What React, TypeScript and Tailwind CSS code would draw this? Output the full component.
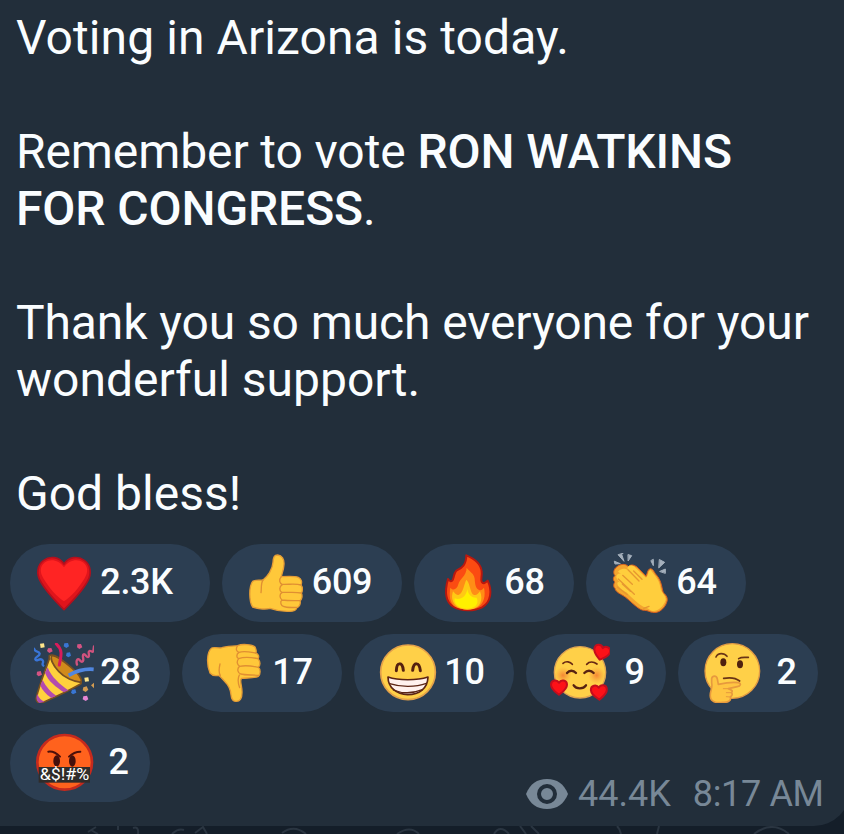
import type { ReactNode } from "react"

interface EmojiProps {
    viewBox: string
    children: ReactNode
}

function Emoji({ viewBox, children }: EmojiProps) {
    return (
        <svg viewBox={viewBox} className="w-[60px] h-[60px] shrink-0" strokeLinecap="round" strokeLinejoin="round">
            {children}
        </svg>
    )
}

const Heart = () => (
    <Emoji viewBox="102 69 180 180">
        <path d="M192 102 C178 80 149 77 131 91 C111 105 109 132 121 153 C138 185 168 215 192 239 C216 215 246 185 263 153 C275 132 273 105 253 91 C235 77 206 80 192 102 Z" fill="#e0141b" stroke="#b3101d" strokeWidth="5" />
        <path d="M192 112 C178 90 151 85 135 97 C118 110 120 128 130 145 C147 174 172 202 192 214 C212 202 237 174 254 145 C264 128 266 110 249 97 C233 85 206 90 192 112 Z" fill="#ff2423" />
    </Emoji>
)

const ThumbsUp = () => (
    <Emoji viewBox="108 69 180 180">
        <path d="M128 154 C137 148 151 152 159 150 C172 140 188 118 189 97 C190 80 193 75 203 75 C216 76 223 88 222 103 C221 119 216 130 214 140 C231 139 254 138 265 142 C276 147 276 158 273 165 C279 172 278 184 274 189 C278 197 276 208 270 212 C273 222 267 231 261 233 C258 244 244 245 231 244 C208 244 191 239 180 235 C164 240 139 235 128 231 C117 215 116 170 128 154 Z" fill="#ffc83a" stroke="#e59c36" strokeWidth="4" />
        <path d="M159 150 C152 160 155 175 153 188 M214 140 C205 150 209 159 217 164 M217 164 C207 170 207 182 216 188 C208 192 208 204 216 210 C208 216 214 227 220 229 C229 233 244 233 260 232 M217 163 C235 164 257 160 273 165 M216 187 C234 188 255 185 274 189 M216 210 C235 213 252 212 270 212" fill="none" stroke="#e08f32" strokeWidth="4" />
    </Emoji>
)

const Fire = () => (
    <Emoji viewBox="99 69 180 180">
        <path d="M184 76 C208 86 229 103 230 126 C232 139 226 148 230 155 C235 164 242 157 248 152 C262 181 259 216 231 232 C208 244 169 244 146 231 C119 215 119 183 129 147 C133 153 139 157 143 150 C149 137 145 133 154 122 C166 115 184 109 184 76 Z" fill="#fb4b12" stroke="#b9180f" strokeWidth="6" />
        <path d="M185 113 C193 125 207 129 209 146 C210 159 211 174 221 179 C228 184 233 177 237 173 C242 196 238 219 219 231 C202 241 169 241 151 230 C134 218 132 198 136 173 C145 184 156 178 160 163 C163 146 184 140 185 113 Z" fill="#ff8d16" />
        <path d="M184 149 C194 158 194 177 202 191 C211 201 220 191 225 184 C236 210 224 232 204 237 C179 243 148 236 142 208 C140 198 142 191 144 184 C151 192 157 200 166 191 C176 181 177 163 184 149 Z" fill="#ffc914" />
        <path d="M187 177 C189 195 202 204 215 203 C224 224 207 236 186 236 C162 237 145 221 149 205 C165 211 184 202 187 177 Z" fill="#fff000" />
    </Emoji>
)

const Clap = () => (
    <Emoji viewBox="90 69 180 180">
        <path d="M104 94 L121 101 L106 102 Z M115 75 L132 94 L125 73 L129 70 Z M145 74 L155 77 L145 92 Z M213 93 L220 107 L220 89 Z M239 89 L254 97 L237 113 Z M240 124 L256 117 L256 129 Z" fill="#a5b0bc" stroke="#a5b0bc" strokeWidth="3" />
        <path d="M106 115 C115 103 135 98 145 110 C153 101 166 105 176 116 L198 139 C203 129 202 118 211 116 C221 117 222 128 231 137 C246 156 245 175 250 188 C259 196 265 205 260 217 C253 237 235 251 218 247 C210 247 205 241 193 241 C178 242 157 218 137 202 C124 192 107 188 105 175 C99 170 101 160 105 156 C98 150 99 142 105 137 C99 129 101 121 106 115 Z" fill="#f4a62f" stroke="#d9601f" strokeWidth="3" />
        <path d="M114 125 C124 112 136 116 144 119 C138 107 153 102 164 111 L198 143 C207 136 203 122 212 120 C221 135 237 145 241 172 C242 188 259 198 257 210 C250 230 235 243 219 243 C207 240 207 234 190 230 C175 223 157 205 139 187 C126 179 111 170 112 158 C116 153 123 158 127 162 C111 152 103 139 114 132 C118 128 124 132 128 136 Z" fill="#ffce3d" />
        <path d="M128 136 L157 163 M144 119 L177 153 M127 162 L151 184 M115 147 L163 193 M112 171 L142 194 M161 123 L186 148 M191 235 L207 229" fill="none" stroke="#e79830" strokeWidth="4" />
    </Emoji>
)

const Party = () => (
    <Emoji viewBox="102 54 180 180">
        <path d="M148 92 C158 86 176 96 197 115 C222 138 247 160 243 176 C213 193 159 219 127 233 C117 236 107 230 109 219 C117 182 135 139 148 102 Z" fill="#ffd13d" stroke="#795020" strokeWidth="5" />
        <path d="M143 127 C153 155 180 179 205 196 L192 202 C169 186 144 169 135 143 Z M128 165 C137 184 153 202 169 212 L154 219 C137 207 126 195 121 181 Z M112 207 C116 218 123 226 134 230 L119 234 C110 230 107 219 112 207 Z" fill="#b34cae" />
        <path d="M155 92 C168 90 191 108 214 128 C234 145 248 160 243 172 C222 170 193 158 176 139 C161 123 150 103 155 92 Z" fill="#d18b1b" stroke="#795020" strokeWidth="5" />
        <path d="M169 57 C191 77 182 96 178 120" fill="none" stroke="#d91b5b" strokeWidth="9" />
        <path d="M206 151 C224 141 248 130 281 133" fill="none" stroke="#5086df" strokeWidth="11" strokeLinecap="butt" />
        <path d="M102 71 C106 84 116 76 119 86 C120 95 104 94 106 103 C109 112 121 96 128 106 C133 113 123 117 130 122" fill="none" stroke="#3975d8" strokeWidth="7" />
        <path d="M231 119 C227 106 233 99 239 105 C243 111 249 113 250 105 C250 96 246 91 251 88 C257 86 259 98 265 96 C271 93 262 80 268 78 C273 76 276 83 280 79 L282 64" fill="none" stroke="#cf527d" strokeWidth="7" />
        <path d="M120 56 L132 55 L134 67 L122 69 Z M253 158 L265 157 L267 169 L255 170 Z" fill="#ffe68b" />
        <path d="M144 70 L154 69 L158 79 L148 84 L141 78 Z M232 58 L243 57 L247 67 L238 72 L231 67 Z M111 140 L122 138 L126 149 L116 154 L110 149 Z" fill="#d55383" />
        <path d="M193 55 L204 54 L207 64 L199 69 L191 64 Z M200 83 L210 82 L213 92 L205 97 L198 92 Z M216 194 L226 193 L229 203 L219 208 L213 203 Z" fill="#3976d3" />
        <path d="M250 187 L260 184 L265 194 L257 201 L248 196 Z M273 181 L282 173 L282 190 Z" fill="#d39b50" />
        <path d="M250 214 L261 212 L265 223 L257 228 L248 223 Z" fill="#e585d4" />
    </Emoji>
)

const ThumbsDown = () => (
    <Emoji viewBox="93 54 180 180">
        <path d="M110 69 C117 66 130 69 138 69 C151 63 170 64 188 62 C201 56 231 58 240 66 C244 75 246 79 242 84 C251 87 253 96 249 101 C256 110 256 120 250 127 C257 133 257 147 250 154 C238 160 215 158 200 160 C192 165 202 183 201 203 C201 221 195 230 182 229 C171 229 169 220 168 209 C167 194 161 181 148 168 C139 158 135 152 129 151 C120 153 111 151 105 144 C95 121 94 82 110 69 Z" fill="#ffc83a" stroke="#e59c36" strokeWidth="4" />
        <path d="M188 62 C181 72 184 79 192 82 C183 88 184 98 191 101 C184 109 186 119 194 124 C184 132 189 144 197 147 M192 82 C207 77 224 81 242 84 M191 101 C207 95 229 97 249 101 M194 124 C211 120 232 123 250 127 M197 147 C211 151 233 149 250 151 M135 117 C132 130 130 143 136 151 M193 150 C187 161 190 177 194 188" fill="none" stroke="#e08f32" strokeWidth="4" />
    </Emoji>
)

const Grin = () => (
    <Emoji viewBox="84 54 180 180">
        <circle cx="174" cy="142" r="82" fill="#ffd048" stroke="#e4a14a" strokeWidth="5" />
        <path d="M139 137 C140 110 157 110 160 136 M188 136 C191 110 208 110 211 137" fill="none" stroke="#552110" strokeWidth="9" />
        <path d="M114 156 C145 167 201 167 234 156 C233 190 208 209 173 209 C140 208 114 188 114 156 Z" fill="#fff1ed" stroke="#5c2514" strokeWidth="5" />
        <path d="M119 176 C152 187 197 187 229 175 M130 195 C157 206 190 205 217 194" fill="none" stroke="#5c2514" strokeWidth="4" />
    </Emoji>
)

const LoveHeart = ({ x, y, rotate }: { x: number; y: number; rotate: number }) => (
    <path
        transform={`translate(${x} ${y}) rotate(${rotate})`}
        d="M0 -13 C-6 -24 -24 -21 -24 -7 C-24 7 -9 16 0 23 C9 16 24 7 24 -7 C24 -21 6 -24 0 -13 Z"
        fill="#fd1118"
        stroke="#c50d1c"
        strokeWidth="6"
    />
)

const Smitten = () => (
    <Emoji viewBox="90 54 180 180">
        <defs>
            <radialGradient id="blush">
                <stop offset="0" stopColor="#f26d2c" stopOpacity="0.75" />
                <stop offset="1" stopColor="#f6923a" stopOpacity="0" />
            </radialGradient>
        </defs>
        <circle cx="180" cy="142" r="77" fill="#ffd048" stroke="#dfa452" strokeWidth="4" />
        <circle cx="129" cy="151" r="26" fill="url(#blush)" />
        <circle cx="230" cy="151" r="26" fill="url(#blush)" />
        <path d="M129 115 C138 107 151 110 157 118 M200 118 C208 109 221 110 231 117" fill="none" stroke="#672713" strokeWidth="5" />
        <path d="M141 144 C148 135 160 135 168 144 M193 144 C201 135 213 135 221 144" fill="none" stroke="#572211" strokeWidth="7" />
        <path d="M161 181 C169 193 190 193 198 181" fill="none" stroke="#572211" strokeWidth="7" />
        <LoveHeart x={245} y={82} rotate={15} />
        <LoveHeart x={117} y={186} rotate={0} />
        <LoveHeart x={237} y={201} rotate={-3} />
    </Emoji>
)

const Thinking = () => (
    <Emoji viewBox="96 54 180 180">
        <circle cx="187" cy="138" r="82" fill="#ffd048" stroke="#e29a43" strokeWidth="4" />
        <path d="M138 96 C144 82 163 84 171 94 M206 101 C215 95 225 98 235 97" fill="none" stroke="#6a3415" strokeWidth="5" />
        <ellipse cx="160" cy="112" rx="9" ry="12" fill="#4f210f" />
        <ellipse cx="210" cy="118" rx="9" ry="12" fill="#4f210f" />
        <path d="M161 160 C178 157 198 159 209 168" fill="none" stroke="#6a3415" strokeWidth="5" />
        <path d="M125 161 C127 151 140 150 142 162 L145 178 C164 174 189 171 205 173 C215 175 212 184 202 185 L175 191 C185 195 190 197 184 203 C190 208 184 214 181 216 C185 227 172 233 158 232 C138 235 121 230 121 214 C119 199 129 188 125 175 Z" fill="#ffc542" stroke="#e79a3e" strokeWidth="5" />
        <path d="M175 191 L160 191 M184 203 L169 203 M181 216 L169 215" fill="none" stroke="#e79a3e" strokeWidth="3" />
    </Emoji>
)

const Cursing = () => (
    <Emoji viewBox="102 54 180 180">
        <circle cx="194" cy="142" r="82" fill="#ff621d" stroke="#c62a1d" strokeWidth="8" />
        <path d="M145 110 C157 108 170 115 180 125 M241 110 C227 110 217 115 207 125" fill="none" stroke="#4c100a" strokeWidth="6" />
        <ellipse cx="170" cy="138" rx="10" ry="17" fill="#45100b" />
        <ellipse cx="217" cy="138" rx="10" ry="17" fill="#45100b" />
        <rect x="116" y="156" width="154" height="47" fill="#302c2a" />
        <text x="119" y="196" fontSize="47" textLength="149" lengthAdjust="spacingAndGlyphs" fill="#ffffff" fontFamily="Roboto, sans-serif">&amp;$!#%</text>
    </Emoji>
)

interface ReactionProps {
    icon: ReactNode
    count: string
    className: string
}

function Reaction({ icon, count, className }: ReactionProps) {
    return (
        <div className={`flex h-[78px] items-center rounded-full bg-[#2c3e52] pl-6 ${className}`}>
            {icon}
            <span className="flex-1 pb-[3px] text-center text-4xl font-medium tracking-[-0.3px] text-[#fafdff]">{count}</span>
        </div>
    )
}

function Eye() {
    return (
        <svg viewBox="0 0 44 32" className="h-8 w-11">
            <path d="M1 16 C5 6 12 1 22 1 C32 1 39 6 43 16 C39 26 32 31 22 31 C12 31 5 26 1 16 Z" fill="#788897" />
            <circle cx="22" cy="16" r="8" fill="#788897" stroke="#222e3a" strokeWidth="4" />
        </svg>
    )
}

export default function App() {
    return (
        <div className="flex h-[834px] w-[844px] flex-col overflow-hidden bg-[#141e29] font-['Roboto',sans-serif]">
            {/* Message bubble */}
            <main className="flex h-[826px] w-[850px] shrink-0 flex-col rounded-br-[36px] bg-[#222e3a] pt-[9px]">
                <div className="h-[535px] pl-4 text-[48px] leading-[57px] text-[#fafdff]">
                    <p className="tracking-[0.08px]">Voting in Arizona is today.</p>
                    <p className="mt-[57px] tracking-[-0.1px]">
                        Remember to vote <span className="font-medium">RON WATKINS</span>
                        <br />
                        <span className="font-medium">FOR CONGRESS</span>.
                    </p>
                    <p className="mt-[57px]">
                        <span className="tracking-[-0.11px]">Thank you so much everyone for your</span>
                        <br />
                        wonderful support.
                    </p>
                    <p className="mt-[57px]">God bless!</p>
                </div>

                {/* Reactions */}
                <div className="flex flex-col gap-3 pl-2.5">
                    <div className="flex gap-3">
                        <Reaction icon={<Heart />} count="2.3K" className="w-[200px] pr-[31px]" />
                        <Reaction icon={<ThumbsUp />} count="609" className="w-[180px] pr-6" />
                        <Reaction icon={<Fire />} count="68" className="w-40 pr-[23px]" />
                        <Reaction icon={<Clap />} count="64" className="w-40 pr-[23px]" />
                    </div>
                    <div className="flex gap-3">
                        <Reaction icon={<Party />} count="28" className="w-40 pr-[23px]" />
                        <Reaction icon={<ThumbsDown />} count="17" className="w-40 pr-[23px]" />
                        <Reaction icon={<Grin />} count="10" className="w-40 pr-[23px]" />
                        <Reaction icon={<Smitten />} count="9" className="w-[140px] pr-[7px]" />
                        <Reaction icon={<Thinking />} count="2" className="w-[140px] pr-[7px]" />
                    </div>
                    <div className="flex items-start">
                        <Reaction icon={<Cursing />} count="2" className="w-[140px] pr-[7px]" />
                        <div className="ml-[375px] flex items-center pt-[50px] text-4xl text-[#788897]">
                            <Eye />
                            <span className="ml-[9px]">44.4K</span>
                            <span className="ml-[22px] whitespace-nowrap tracking-[-0.35px]">8:17 AM</span>
                        </div>
                    </div>
                </div>
            </main>

            {/* Chat wallpaper */}
            <svg viewBox="0 0 844 8" className="h-2 w-[844px] shrink-0" fill="none" stroke="#2a3541" strokeWidth="2">
                <path d="M88 6 L96 1 M91 4 L98 8 M118 0 V4 M133 2 Q139 0 138 8 M172 8 Q178 2 184 4 M195 7 L203 1 L207 8 M282 7 Q294 -2 306 8 M397 8 Q410 -1 419 8 M494 8 Q500 -2 509 8 M520 0 L526 8 M531 0 L539 8 M617 0 Q620 3 621 8 M659 0 L657 8 M754 8 Q772 -6 789 8" />
            </svg>
        </div>
    )
}
